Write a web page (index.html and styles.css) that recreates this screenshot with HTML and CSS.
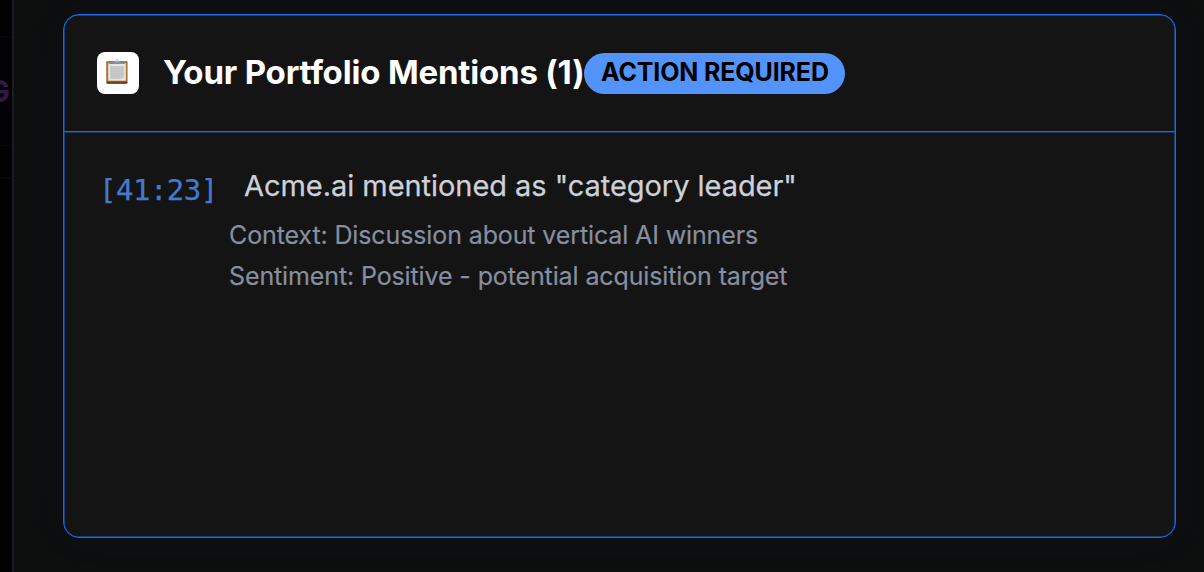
FILE: index.html
```html
<!DOCTYPE html>
<html lang="en">
<head>
<meta charset="utf-8">
<title>Your Portfolio Mentions</title>
<link rel="stylesheet" href="styles.css">
</head>
<body>
<div class="app">
  <aside class="sidebar"><div class="sidebar-item">G</div><div class="sidebar-line"></div></aside>
  <main class="content">
    <section class="card">
      <header class="card-header">
        <span class="icon-tile">
          <svg width="22" height="26" viewBox="0 0 22 26" aria-hidden="true">
            <rect x="0.2" y="2" width="21.4" height="22.7" rx="1.2" fill="#ad7431"/>
            <path d="M.8 22.6h20.4v1.3q0 .8-.8.8H1.6q-.8 0-.8-.8z" fill="#70401b"/>
            <path d="M2.2 4.2h17.6v17.5H2.2z" fill="#e5e6e7"/>
            <path d="M4 7h14v11.5l-3 1.5H4z" fill="#c8c9ca"/>
            <path d="M5 9.5h12M5 12h12M5 14.5h12M5 17h9" stroke="#bdbebf" stroke-width=".8"/>
            <path d="M3 2.5h16v2.4H3z" fill="#85878d"/>
            <path d="M7 3.2q1.8-.3 2.3-1.8Q11-.8 12.7 1.4q.5 1.5 2.3 1.8z" fill="#a9b5c4"/>
            <circle cx="11" cy="1.5" r=".7" fill="#fff"/>
          </svg>
        </span>
        <h1 class="title">Your Portfolio Mentions (1)</h1>
        <span class="badge">ACTION REQUIRED</span>
      </header>
      <div class="card-body">
        <div class="mention"><span class="time">[41:23]</span><span class="headline">Acme.ai mentioned as "category leader"</span></div>
        <div class="details">
          <p class="detail">Context: Discussion about vertical AI winners</p>
          <p class="detail sentiment">Sentiment: Positive - potential acquisition target</p>
        </div>
      </div>
    </section>
  </main>
</div>
</body>
</html>
```
FILE: styles.css
```css
* { box-sizing: border-box; }
body { margin: 0; background: #000; font-family: Inter, sans-serif; }
.app { display: flex; width: 1204px; height: 572px; overflow: hidden; }
.sidebar { width: 12px; flex: none; overflow: hidden; padding-top: 36px; background: #010102; }
.sidebar-item { height: 110px; display: flex; align-items: center; justify-content: flex-end; padding-right: 2px; border-top: 1px solid #0c0811; border-bottom: 1px solid #08060b; background: #040207; color: #2e1a47; font-size: 30px; font-weight: 700; }
.sidebar-line { height: 33px; border-bottom: 2px solid #070707; }
.content { flex: 1; padding: 14px 28px 34px 50px; border-left: 2px solid #1a1c24; background: #0d0e0e; }
.card { height: 524px; width: 1113px; margin-left: -1px; border: 1px solid #1868ed; border-radius: 16px; background: #141414; box-shadow: 0 0 40px rgba(24, 104, 237, .05), inset 0 0 0 .5px #1868ed; }
.card-header { display: flex; height: 117px; padding: 0 33px; align-items: center; border-bottom: 1px solid #1868ed; box-shadow: 0 1px #163464; }
.icon-tile { display: flex; width: 42px; height: 42px; margin-right: 24px; align-items: center; justify-content: center; border-radius: 8px; background: #fff; }
.icon-tile svg { margin-top: -2px; margin-right: 3px; }
.title { width: 421px; margin: -2px 0 0; color: #fff; font-size: 33px; font-weight: 700; line-height: 42px; letter-spacing: -.18px; white-space: nowrap; }
.badge { height: 41px; width: 261px; padding: 0 17px; border-radius: 21px; background: #5293fc; color: #000; font-size: 25px; font-weight: 700; line-height: 39px; letter-spacing: -.15px; white-space: nowrap; }
.card-body { padding: 31px 38px 31px 35px; }
.mention { display: flex; height: 52px; align-items: flex-start; line-height: 46px; white-space: nowrap; }
.time { width: 145px; flex: none; padding-top: 4px; color: #4479cf; font-family: "DejaVu Sans Mono", monospace; font-size: 29px; letter-spacing: -.5px; -webkit-text-stroke: .25px #4479cf; }
.headline { color: #ccd1d8; font-size: 29px; letter-spacing: -.05px; -webkit-text-stroke: .25px #ccd1d8; }
.details { padding-left: 130px; }
.detail { margin: 0; color: #868e9f; font-size: 25px; line-height: 41px; letter-spacing: -.12px; -webkit-text-stroke: .2px #868e9f; white-space: nowrap; }
```
